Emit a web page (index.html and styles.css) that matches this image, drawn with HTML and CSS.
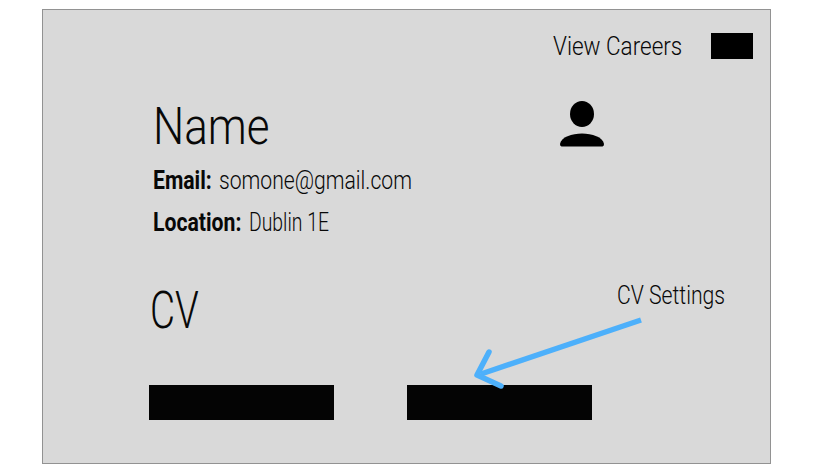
FILE: index.html
```html
<!DOCTYPE html>
<html lang="en">
<head>
<meta charset="utf-8">
<title>Profile</title>
<link rel="stylesheet" href="styles.css">
</head>
<body>
<main class="card">
  <header class="topbar">
    <a class="link careers"><span>View Careers</span></a>
    <div class="menu"></div>
  </header>
  <section class="profile">
    <div class="details">
      <h1 class="title name"><span>Name</span></h1>
      <p class="row"><b class="label-email"><span>Email:</span></b><span class="value-email"><span>somone@gmail.com</span></span></p>
      <p class="row"><b class="label-location"><span>Location:</span></b><span class="value-location"><span>Dublin 1E</span></span></p>
    </div>
    <svg class="avatar" viewBox="0 0 44 46" width="44" height="46"><ellipse cx="22" cy="13" rx="12" ry="13"/><path d="M1.500 45.500Q0 45 0 43C1 36 12 32.500 22 32.500S43 36 44 43Q44 45 42.500 45.500Z"/></svg>
  </section>
  <section class="cv">
    <h2 class="title cv-title"><span>CV</span></h2>
    <a class="link settings"><span>CV Settings</span></a>
  </section>
  <section class="files">
    <div class="file"></div>
    <div class="file"></div>
  </section>
  <svg class="arrow" viewBox="0 0 176 78" width="176" height="78"><path d="M171 5L11 59"/><path class="head" d="M19 37L7 60L31 71"/></svg>
</main>
</body>
</html>
```

FILE: styles.css
```css
* { box-sizing: border-box; }
body {
  margin: 0;
  padding: 9px 0 0 42px;
  background: #fff;
  color: #080808;
  font-family: Roboto, "Liberation Sans", sans-serif;
  font-weight: 300;
}
.card {
  position: relative;
  width: 729px;
  height: 455px;
  border: 1px solid #929292;
  background: #d9d9d9;
}
.card span { white-space: nowrap; }
.card span:not(:has(span)) {
  display: inline-block;
  transform-origin: 0 50%;
}
.topbar {
  display: flex;
  justify-content: flex-end;
  align-items: center;
  height: 26px;
  margin: 23px 17px 0 0;
}
.link, .row {
  margin: 0;
  font-size: 26px;
  line-height: 30px;
}
.careers { width: 158px; }
.careers span { transform: scaleX(.865); }
.menu { width: 42px; height: 26px; background: #000; }
.profile {
  display: flex;
  margin: 38px 0 0 110px;
  height: 140px;
}
.details { width: 407px; }
.title {
  margin: 0;
  font-size: 52px;
  line-height: 60px;
  font-weight: 300;
}
.name span { transform: scaleX(.845); }
.row { display: flex; margin-top: 8px; }
.row + .row { margin-top: 12px; }
.row b { font-weight: 700; }
.label-email { width: 66px; }
.label-email span { transform: scaleX(.815); }
.value-email span { transform: scaleX(.813); }
.label-location { width: 96px; }
.label-location span { transform: scaleX(.815); }
.value-location span { transform: scaleX(.745); }
.avatar { margin-top: 4px; fill: #000; }
.cv {
  display: flex;
  margin: 43px 0 0 107px;
  height: 60px;
}
.cv-title { width: 467px; padding-top: 1px; }
.cv-title span { transform: scaleX(.74); }
.settings span { transform: scaleX(.815); }
.files {
  display: flex;
  gap: 73px;
  margin: 45px 0 0 106px;
}
.file { width: 185px; height: 35px; background: #040404; }
.arrow {
  position: absolute;
  left: 427px;
  top: 305px;
  fill: none;
  stroke: #4db0fb;
  stroke-width: 5.5;
}
.head { stroke-linecap: round; stroke-linejoin: round; }
```
